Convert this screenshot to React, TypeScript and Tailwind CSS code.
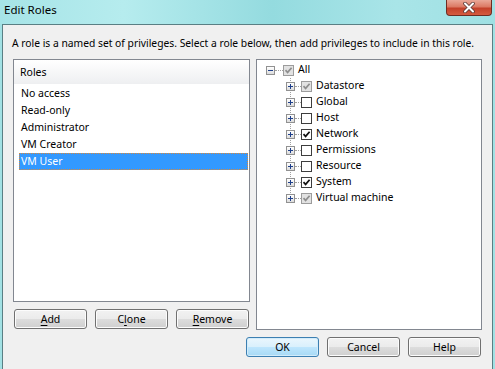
import React from 'react';

type CheckState = 'on' | 'off' | 'gray';

const roles = ['No access', 'Read-only', 'Administrator', 'VM Creator', 'VM User'];

const privileges: { name: string; state: CheckState }[] = [
  { name: 'Datastore', state: 'gray' },
  { name: 'Global', state: 'off' },
  { name: 'Host', state: 'off' },
  { name: 'Network', state: 'on' },
  { name: 'Permissions', state: 'off' },
  { name: 'Resource', state: 'off' },
  { name: 'System', state: 'on' },
  { name: 'Virtual machine', state: 'gray' },
];

function CheckBox({ state }: { state: CheckState }) {
  if (state === 'gray') {
    return (
      <span className="w-[11px] h-[11px] shrink-0 border border-[#9c9c9c] bg-[#e2e2e2] flex items-center justify-center">
        <svg width="9" height="9" viewBox="0 0 9 9">
          <path d="M1.5 4.2 L3.6 6.4 L7.6 1.8" fill="none" stroke="#8e8e8e" strokeWidth="1.7" />
        </svg>
      </span>
    );
  }
  return (
    <span className="w-[11px] h-[11px] shrink-0 border border-[#3d3d3d] bg-white flex items-center justify-center">
      {state === 'on' && (
        <svg width="9" height="9" viewBox="0 0 9 9">
          <path d="M1.5 4.2 L3.6 6.4 L7.6 1.8" fill="none" stroke="#111" strokeWidth="1.7" />
        </svg>
      )}
    </span>
  );
}

function Expander({ open }: { open?: boolean }) {
  return (
    <span className="relative w-[9px] h-[9px] shrink-0 border border-[#919191] bg-[linear-gradient(#ffffff,#dcdcdc)] flex items-center justify-center">
      <svg width="7" height="7" viewBox="0 0 7 7">
        <path d="M1 3.5 H6" stroke="#1e3f8a" strokeWidth="1" />
        {!open && <path d="M3.5 1 V6" stroke="#1e3f8a" strokeWidth="1" />}
      </svg>
    </span>
  );
}

function Btn({ children, primary }: { children: React.ReactNode; primary?: boolean }) {
  return (
    <button
      className={
        primary
          ? 'w-[73px] h-[20px] rounded-[3px] border border-[#3c7fb1] bg-[linear-gradient(#eaf6fd_0%,#d9f0fc_50%,#bee6fd_50%,#a7d9f5_100%)] shadow-[inset_0_0_0_1px_#d2ecfb] text-[10.5px] leading-none text-black flex items-center justify-center'
          : 'w-[73px] h-[20px] rounded-[3px] border border-[#707070] bg-[linear-gradient(#f2f2f2_0%,#ebebeb_50%,#dddddd_50%,#cfcfcf_100%)] shadow-[inset_0_0_0_1px_#fcfcfc] text-[10.5px] leading-none text-black flex items-center justify-center'
      }
    >
      {children}
    </button>
  );
}

export default function App() {
  return (
    <div className="w-[495px] h-[369px] overflow-hidden relative flex flex-col bg-[#a2e1e4] font-['Noto_Sans',sans-serif] text-black">
      {/* title bar */}
      <div className="h-[24px] shrink-0 pl-[4px] pt-[3px] text-[11.5px] leading-[14px] text-black bg-[linear-gradient(90deg,#a6e4e7_0%,#b6ecee_25%,#94dbdf_55%,#a9e5e8_80%,#9fe0e3_100%)]">
        Edit Roles
      </div>
      <div className="absolute top-0 right-[3px] w-[46px] h-[16px] rounded-b-[4px] border border-t-0 border-[#6e2c22] bg-[linear-gradient(#eaa898_0%,#dc7a64_45%,#c4412a_55%,#d55b40_100%)] flex items-center justify-center">
        <svg width="14" height="11" viewBox="0 0 14 11">
          <path d="M3 1.5 L11 9.5 M11 1.5 L3 9.5" stroke="#5a3a36" strokeWidth="3.6" strokeLinecap="round" />
          <path d="M3 1.5 L11 9.5 M11 1.5 L3 9.5" stroke="#ffffff" strokeWidth="2" strokeLinecap="round" />
        </svg>
      </div>

      {/* dialog body */}
      <div className="flex-1 ml-[2px] mr-[2px] border border-b-0 border-[#5a7f84] bg-[#f0f0f0] flex flex-col">
        <p className="pl-[9px] pt-[10px] h-[26px] text-[10.3px] leading-[16px] whitespace-nowrap">
          A role is a named set of privileges. Select a role below, then add privileges to include in this role.
        </p>
        <div className="mt-[8px] pl-[10px] flex gap-[6px] items-start">
          <div className="w-[237px] flex flex-col">
            <div className="h-[243px] border border-[#828790] bg-white flex flex-col">
              <div className="h-[24px] pl-[6px] pt-[1px] flex items-center bg-[linear-gradient(#ffffff,#eeeff1)] text-[10.5px]">Roles</div>
              <div className="pt-[1px] pl-[5px] pr-[1px] flex flex-col">
                {roles.map((r) =>
                  r === 'VM User' ? (
                    <div key={r} className="h-[17px] pl-[1px] pt-[1px] border border-dotted border-[#d9883b] bg-[#3399ff] text-white text-[10.5px] flex items-center">
                      {r}
                    </div>
                  ) : (
                    <div key={r} className="h-[17px] pl-[2px] pt-[1px] text-[10.5px] flex items-center">
                      {r}
                    </div>
                  )
                )}
              </div>
            </div>
            <div className="mt-[7px] pl-[1px] flex gap-[8px]">
              <Btn>
                <span className="underline underline-offset-2">A</span>dd
              </Btn>
              <Btn>
                C<span className="underline underline-offset-2">l</span>one
              </Btn>
              <Btn>
                <span className="underline underline-offset-2">R</span>emove
              </Btn>
            </div>
          </div>

          <div className="relative w-[226px] h-[271px] border border-[#828790] bg-white pt-[2px] flex flex-col">
            <div className="absolute left-[33px] top-[18px] h-[121px] border-l border-dotted border-[#a0a0a0]" />
            <div className="h-[16px] pl-[9px] flex items-center text-[10.5px]">
              <Expander open />
              <span className="w-[8px] border-t border-dotted border-[#a0a0a0]" />
              <CheckBox state="gray" />
              <span className="ml-[4px]">All</span>
            </div>
            {privileges.map((p) => (
              <div key={p.name} className="h-[16px] pl-[29px] flex items-center text-[10.5px]">
                <Expander />
                <span className="w-[6px] border-t border-dotted border-[#a0a0a0]" />
                <CheckBox state={p.state} />
                <span className="ml-[4px]">{p.name}</span>
              </div>
            ))}
          </div>
        </div>
        <div className="mt-[7px] pr-[11px] flex justify-end gap-[8px]">
          <Btn primary>OK</Btn>
          <Btn>Cancel</Btn>
          <Btn>Help</Btn>
        </div>
      </div>
    </div>
  );
}
